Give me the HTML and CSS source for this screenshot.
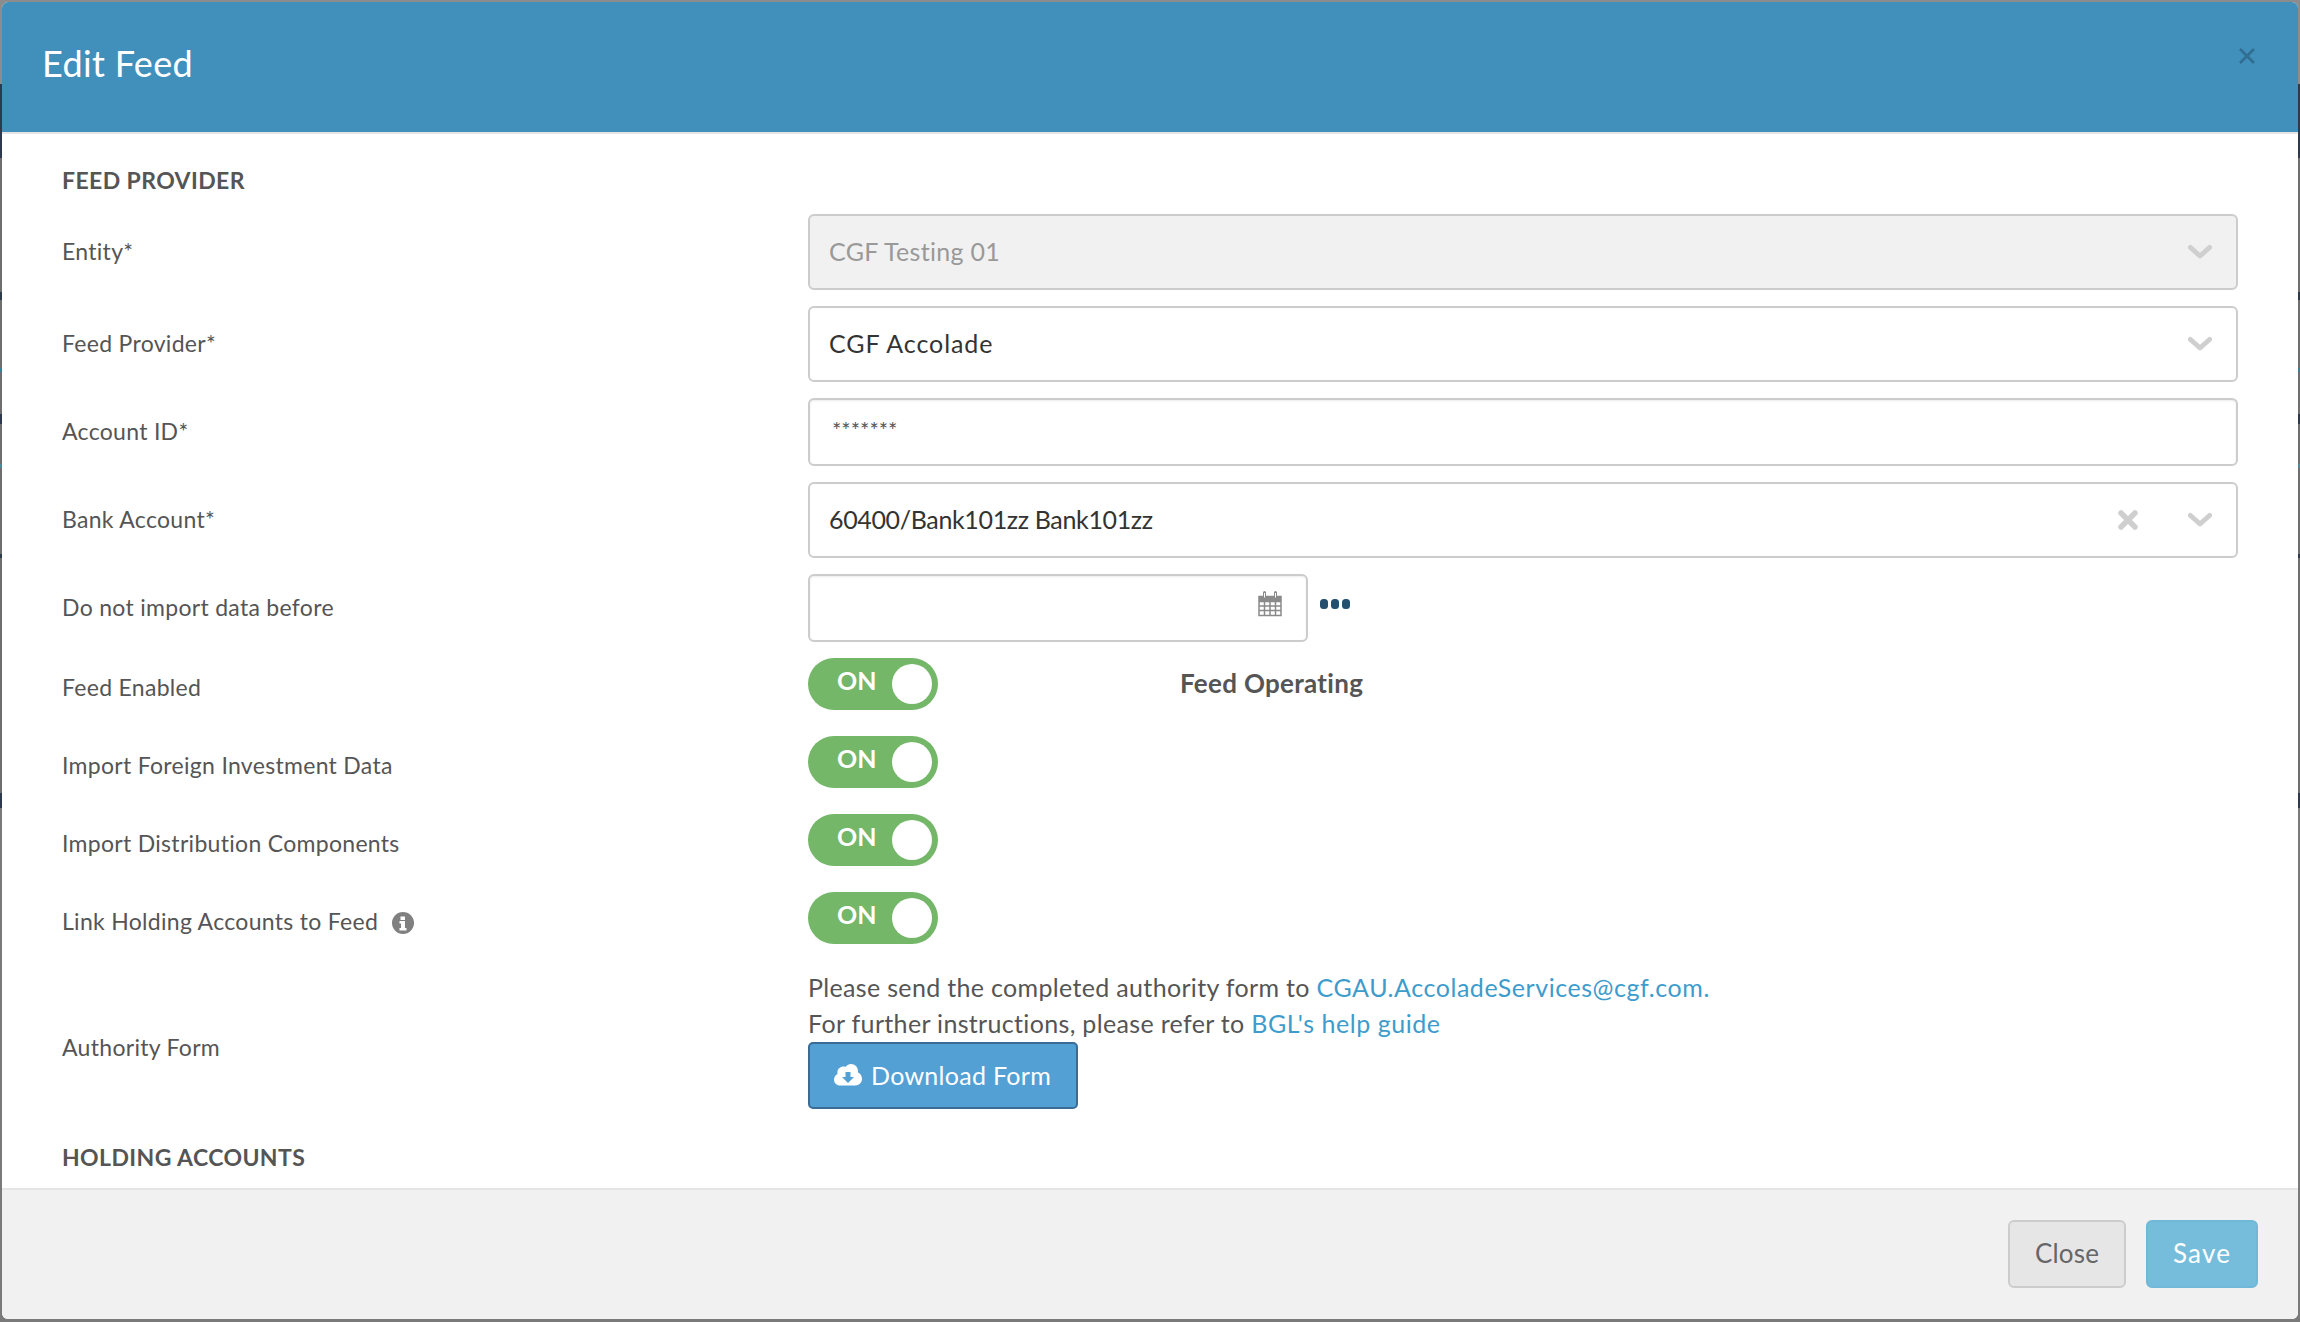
FILE: index.html
```html
<!DOCTYPE html>
<html lang="en">
<head>
<meta charset="utf-8">
<title>Edit Feed</title>
<link rel="stylesheet" href="styles.css">
</head>
<body>
<div class="modal">
  <header class="modal-header">
    <h1 class="modal-title">Edit Feed</h1>
    <button class="modal-x" aria-label="Close">
      <svg width="18" height="18" viewBox="0 0 18 18"><path d="M2 2 16 16M16 2 2 16" stroke="#2f6e90" stroke-width="2.6" fill="none"/></svg>
    </button>
  </header>
  <main class="modal-body">
    <h2 class="section">FEED PROVIDER</h2>
    <div class="row">
      <label class="label">Entity*</label>
      <div class="field select disabled"><span class="value testing">CGF Testing 01</span>
        <svg class="chev" width="26" height="16" viewBox="0 0 26 16"><path d="M3.500 3.500 13 12 22.500 3.500" stroke="#cfcfcf" stroke-width="5" stroke-linecap="round" stroke-linejoin="round" fill="none"/></svg>
      </div>
    </div>
    <div class="row">
      <label class="label">Feed Provider*</label>
      <div class="field select"><span class="value accolade">CGF Accolade</span>
        <svg class="chev" width="26" height="16" viewBox="0 0 26 16"><path d="M3.500 3.500 13 12 22.500 3.500" stroke="#cfcfcf" stroke-width="5" stroke-linecap="round" stroke-linejoin="round" fill="none"/></svg>
      </div>
    </div>
    <div class="row">
      <label class="label">Account ID*</label>
      <div class="field input"><span class="mask">*******</span></div>
    </div>
    <div class="row">
      <label class="label">Bank Account*</label>
      <div class="field select bank"><span class="value account">60400/Bank101zz Bank101zz</span>
        <svg class="clear" width="24" height="24" viewBox="0 0 24 24"><path d="M5 5 19 19M19 5 5 19" stroke="#cfcfcf" stroke-width="5.500" stroke-linecap="round" fill="none"/></svg>
        <svg class="chev" width="26" height="16" viewBox="0 0 26 16"><path d="M3.500 3.500 13 12 22.500 3.500" stroke="#cfcfcf" stroke-width="5" stroke-linecap="round" stroke-linejoin="round" fill="none"/></svg>
      </div>
    </div>
    <div class="row">
      <label class="label">Do not import data before</label>
      <div class="date-wrap">
        <div class="field date">
          <svg class="cal" width="24" height="26" viewBox="0 0 24 26"><path d="M1 5.500H23V24.500H1Z M1 10.500H23 M1 15H23 M1 19.500H23 M6.500 10.500V24.500 M12 10.500V24.500 M17.500 10.500V24.500" stroke="#8a8a8a" stroke-width="1.500" fill="#fff"/><path d="M1 5.500H23V10.500H1Z" fill="#8a8a8a"/><path d="M6.500 1.500V7M17.500 1.500V7" stroke="#8a8a8a" stroke-width="3" stroke-linecap="round"/><path d="M6.500 2V6.500M17.500 2V6.500" stroke="#fff" stroke-width="1"/></svg>
        </div>
        <svg class="dots" width="30" height="10" viewBox="0 0 30 10"><rect x="0" y="0" width="8" height="10" rx="3.500" fill="#23506f"/><rect x="11" y="0" width="8" height="10" rx="3.500" fill="#23506f"/><rect x="22" y="0" width="8" height="10" rx="3.500" fill="#23506f"/></svg>
      </div>
    </div>
    <div class="row toggle-row">
      <label class="label low">Feed Enabled</label>
      <div class="toggle"><span class="on">ON</span><span class="knob"></span></div>
      <strong class="status">Feed Operating</strong>
    </div>
    <div class="row toggle-row">
      <label class="label low">Import Foreign Investment Data</label>
      <div class="toggle"><span class="on">ON</span><span class="knob"></span></div>
    </div>
    <div class="row toggle-row">
      <label class="label low">Import Distribution Components</label>
      <div class="toggle"><span class="on">ON</span><span class="knob"></span></div>
    </div>
    <div class="row toggle-row">
      <label class="label low">Link Holding Accounts to Feed
        <svg class="info" width="22" height="22" viewBox="0 0 22 22"><circle cx="11" cy="11" r="11" fill="#808080"/><path d="M8.500 4.500h4.500v3.500H8.500zM7.500 9h5.500v7h1.500v2.500h-7V16H9v-4.500H7.500z" fill="#fff"/></svg>
      </label>
      <div class="toggle"><span class="on">ON</span><span class="knob"></span></div>
    </div>
    <div class="row auth-row">
      <label class="label auth-label">Authority Form</label>
      <div class="auth">
        <p class="auth-line">Please send the completed authority form to <a href="#">CGAU.AccoladeServices@cgf.com.</a></p>
        <p class="auth-line">For further instructions, please refer to <a href="#">BGL's help guide</a></p>
        <button class="download">
          <svg width="28" height="22" viewBox="0 0 28 22"><path fill-rule="evenodd" d="M6 21.500C2.700 21.500 0 19 0 15.500 0 13 1.400 11 3.500 10 3.400 9.500 3.400 9 3.400 8.500 3.400 5 6.200 2.500 9.500 2.500c1 0 1.500.2 2 .4C13 1 15 0 17 0c4 0 7 3 7 7v1.500c2.500 1 4 3.500 4 6.500 0 3.500-2.800 6.500-6.500 6.500zM11.500 8v5H8l6 6 6-6h-3.500V8z" fill="#fff"/></svg>
          <span>Download Form</span>
        </button>
      </div>
    </div>
    <h2 class="section holding">HOLDING ACCOUNTS</h2>
  </main>
  <footer class="modal-footer">
    <button class="btn btn-close">Close</button>
    <button class="btn btn-save">Save</button>
  </footer>
</div>
</body>
</html>
```

FILE: styles.css
```css
* { box-sizing: border-box; }
html, body { height: 100%; }
body {
  margin: 0;
  height: 1322px;
  padding: 2px;
  overflow: hidden;
  background: linear-gradient(to bottom,
    #8c8c8c 0, #8c8c8c 84px,
    #2d3a4c 84px, #2d3a4c 158px,
    #6e6e6e 158px, #6e6e6e 292px,
    #2d3a4c 292px, #2d3a4c 300px,
    #6e6e6e 300px, #6e6e6e 368px,
    #3a7f95 368px, #3a7f95 372px,
    #6e6e6e 372px, #6e6e6e 414px,
    #2d3a4c 414px, #2d3a4c 424px,
    #6e6e6e 424px, #6e6e6e 464px,
    #4f8796 464px, #4f8796 468px,
    #6e6e6e 468px, #6e6e6e 554px,
    #2d3a4c 554px, #2d3a4c 558px,
    #6e6e6e 558px, #6e6e6e 793px,
    #2d3a4c 793px, #2d3a4c 808px,
    #7a7a7a 808px, #7a7a7a 1322px);
  font-family: Lato, "Open Sans", Arial, sans-serif;
  color: #555;
}
.modal {
  height: 1317px;
  display: flex;
  flex-direction: column;
  border-radius: 6px;
  overflow: hidden;
  background: #fff;
}
.modal-header {
  flex: 0 0 132px;
  display: flex;
  justify-content: space-between;
  align-items: flex-start;
  background: #418fbb;
  border-bottom: 2px solid #e5e5e5;
  padding: 0 41px;
}
.modal-title {
  margin: 37px 0 0 -1px;
  font-size: 36px;
  line-height: 48px;
  font-weight: 400;
  letter-spacing: .35px;
  color: #fff;
}
.modal-x {
  margin: 45px 1px 0 0;
  padding: 0;
  border: 0;
  background: none;
  line-height: 0;
}
.modal-body {
  flex: 1;
  min-height: 0;
  overflow: hidden;
  padding: 30px 60px 0;
}
.section {
  margin: 0 0 18px;
  height: 32px;
  line-height: 32px;
  font-size: 23px;
  font-weight: 700;
  letter-spacing: .4px;
  color: #555;
}
.row {
  display: flex;
  align-items: center;
  margin-bottom: 16px;
}
.label {
  flex: 0 0 746px;
  padding-bottom: 2px;
  font-size: 23px;
  line-height: 30px;
  letter-spacing: .3px;
  color: #555;
}
.low { padding-top: 8px; }
.info { vertical-align: -4px; margin-left: 8px; }
.field {
  position: relative;
  display: flex;
  align-items: center;
  flex: 1;
  height: 76px;
  padding: 0 20px;
  border: 2px solid #ccc;
  border-radius: 6px;
  background: #fff;
}
.disabled { background: #f1f1f1; }
.value { margin: -2px 0 0 -1px; font-size: 25px; color: #333; }
.testing { letter-spacing: .3px; }
.accolade { letter-spacing: .9px; }
.account { letter-spacing: -.35px; }
.disabled .value { color: #999; }
.chev { position: absolute; right: 23px; top: 28px; }
.clear { position: absolute; right: 96px; top: 24px; }
.input { height: 68px; align-items: flex-start; box-shadow: inset 0 1px 2px rgba(0,0,0,.08); }
.mask { font-size: 22px; line-height: 26px; margin: 17px 0 0 2px; color: #555; }
.date-wrap { display: flex; flex: 1; align-items: center; }
.date { flex: 0 0 500px; height: 68px; box-shadow: inset 0 1px 2px rgba(0,0,0,.08); }
.cal { position: absolute; right: 24px; top: 15px; }
.dots { margin: -8px 0 0 12px; }
.toggle-row { margin-bottom: 26px; }
.toggle {
  position: relative;
  flex: 0 0 130px;
  height: 52px;
  border-radius: 26px;
  background: #74b768;
}
.on {
  position: absolute;
  left: 29px;
  top: 7px;
  font-size: 25px;
  line-height: 30px;
  font-weight: 700;
  color: #fff;
}
.knob {
  position: absolute;
  right: 6px;
  top: 6px;
  width: 40px;
  height: 40px;
  border-radius: 50%;
  background: #fff;
}
.status {
  margin: -3px 0 0 242px;
  font-size: 26px;
  font-weight: 700;
  letter-spacing: .3px;
  color: #555;
}
.auth-row { margin: 0 0 32px; align-items: flex-start; }
.auth-label { padding-top: 62px; }
.auth { flex: 1; }
.auth-line {
  margin: 0;
  padding-bottom: 2px;
  font-size: 25px;
  line-height: 34px;
  letter-spacing: .33px;
  color: #555;
}
.auth-line a { color: #3d9ccc; text-decoration: none; letter-spacing: .55px; }
.download {
  display: flex;
  align-items: center;
  gap: 9px;
  width: 270px;
  height: 67px;
  padding: 0 0 2px 24px;
  border: 2px solid #3b6c97;
  border-radius: 5px;
  background: #53a0d4;
  color: #fff;
  font: 400 25px Lato, "Open Sans", Arial, sans-serif;
  letter-spacing: .3px;
}
.holding { margin: 0; }
.modal-footer {
  flex: 0 0 131px;
  display: flex;
  justify-content: flex-end;
  gap: 20px;
  padding: 30px 40px 0 0;
  background: #f1f1f1;
  border-top: 2px solid #e5e5e5;
}
.btn {
  height: 68px;
  padding-bottom: 3px;
  border-radius: 6px;
  font: 400 26px Lato, "Open Sans", Arial, sans-serif;
}
.btn-close { width: 118px; background: #e6e6e6; border: 2px solid #ccc; color: #666; letter-spacing: .2px; }
.btn-save { width: 112px; background: #76bddb; border: 2px solid #70b8d8; color: #fff; letter-spacing: 1.2px; }
```
